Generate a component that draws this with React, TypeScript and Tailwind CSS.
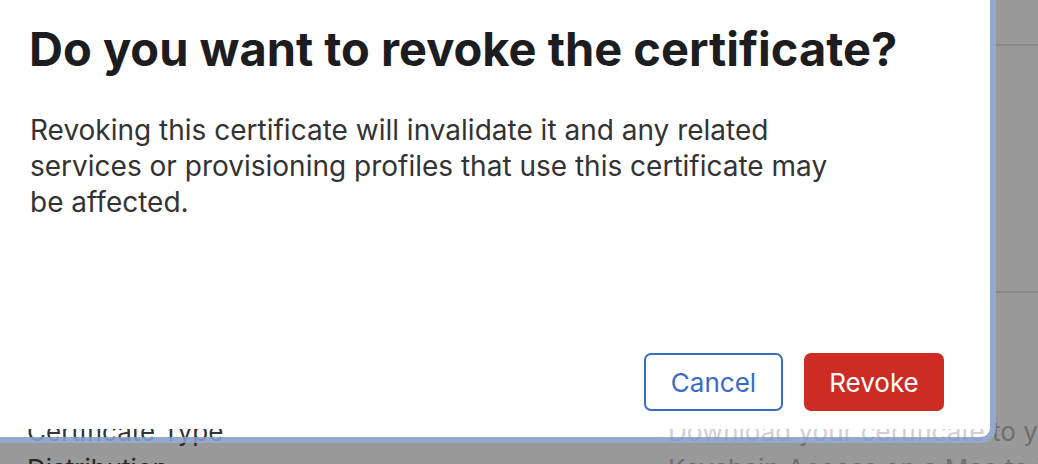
export default function App() {
  return (
    <div className="relative w-[1038px] h-[464px] overflow-hidden bg-white" style={{ fontFamily: "Inter, 'Noto Sans', sans-serif" }}>
      {/* page behind the modal */}
      <div className="flex flex-col h-full">
        <div className="h-[46px] shrink-0 border-b-2 border-[#e3e3e3]" />
        <div className="h-[247px] shrink-0 border-b-2 border-[#e3e3e3]" />
        <div className="flex pt-[120px] text-[26px] leading-[37px]">
          <div className="w-[668px] shrink-0 pl-[27px] text-[#444]">
            <div>Certificate Type</div>
            <div>Distribution</div>
          </div>
          <div className="text-[#b9b9b9] whitespace-nowrap">
            <div>Download your certificate to your Mac</div>
            <div>Keychain Access on a Mac to install it.</div>
          </div>
        </div>
      </div>

      {/* overlay */}
      <div className="absolute inset-0 bg-black/40" />

      {/* dialog */}
      <div className="absolute left-0 top-0 w-[990px] h-[437px] overflow-hidden rounded-br-[9px] bg-white shadow-[0_0_0_6px_rgba(148,173,217,0.8)] flex flex-col">
        <h1 className="pl-[29px] pt-[21px] text-[47px] leading-[56px] font-bold text-[#1d1d1f]">
          Do you want to revoke the certificate?
        </h1>
        <p className="pl-[30px] w-[852px] mt-[35px] text-[28px] leading-[36px] text-[#333]">
          Revoking this certificate will invalidate it and any related services or provisioning profiles that use this certificate may be affected.
        </p>
        <div className="mt-auto flex justify-end gap-[21px] pr-[46px] pb-[26px]">
          <button className="w-[139px] h-[58px] rounded-[7px] border-2 border-[#3b6cc4] text-[#3b6cc4] text-[26px]">
            Cancel
          </button>
          <button className="w-[140px] h-[58px] rounded-[7px] bg-[#cc2c23] text-white text-[26px]">
            Revoke
          </button>
        </div>

        {/* page text showing through the lower edge */}
        <div className="absolute left-0 right-0 top-[429px] h-[8px] overflow-hidden pointer-events-none">
          <div className="-mt-[16px] flex text-[26px] leading-[37px]">
            <div className="w-[668px] shrink-0 pl-[27px] text-[#333]">Certificate Type</div>
            <div className="text-[#d0d0d0] whitespace-nowrap">Download your certificate to your Mac</div>
          </div>
        </div>
      </div>
    </div>
  );
}
